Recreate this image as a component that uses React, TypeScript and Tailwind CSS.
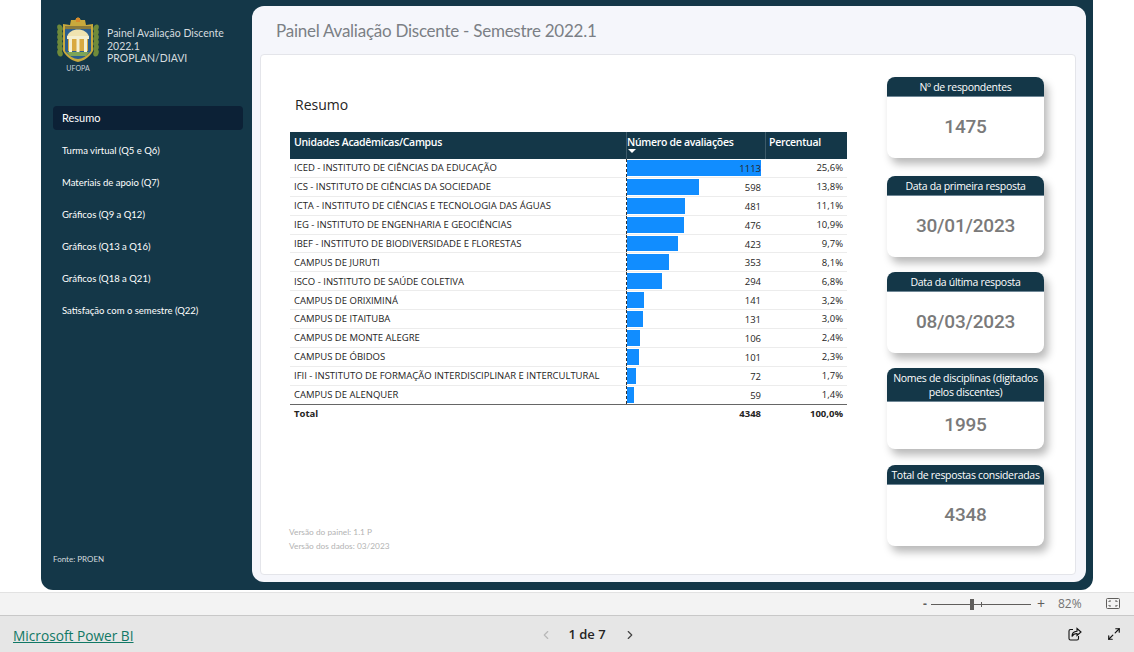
import React from 'react';
import { ChevronLeft, ChevronRight, Maximize2 } from 'lucide-react';

const menu = [
  'Turma virtual (Q5 e Q6)',
  'Materiais de apoio (Q7)',
  'Gráficos (Q9 a Q12)',
  'Gráficos (Q13 a Q16)',
  'Gráficos (Q18 a Q21)',
  'Satisfação com o semestre (Q22)',
];

const rows = [
  { name: 'ICED - INSTITUTO DE CIÊNCIAS DA EDUCAÇÃO', total: 1113, pct: '25,6%' },
  { name: 'ICS - INSTITUTO DE CIÊNCIAS DA SOCIEDADE', total: 598, pct: '13,8%' },
  { name: 'ICTA - INSTITUTO DE CIÊNCIAS E TECNOLOGIA DAS ÁGUAS', total: 481, pct: '11,1%' },
  { name: 'IEG - INSTITUTO DE ENGENHARIA E GEOCIÊNCIAS', total: 476, pct: '10,9%' },
  { name: 'IBEF - INSTITUTO DE BIODIVERSIDADE E FLORESTAS', total: 423, pct: '9,7%' },
  { name: 'CAMPUS DE JURUTI', total: 353, pct: '8,1%' },
  { name: 'ISCO - INSTITUTO DE SAÚDE COLETIVA', total: 294, pct: '6,8%' },
  { name: 'CAMPUS DE ORIXIMINÁ', total: 141, pct: '3,2%' },
  { name: 'CAMPUS DE ITAITUBA', total: 131, pct: '3,0%' },
  { name: 'CAMPUS DE MONTE ALEGRE', total: 106, pct: '2,4%' },
  { name: 'CAMPUS DE ÓBIDOS', total: 101, pct: '2,3%' },
  { name: 'IFII - INSTITUTO DE FORMAÇÃO INTERDISCIPLINAR E INTERCULTURAL', total: 72, pct: '1,7%' },
  { name: 'CAMPUS DE ALENQUER', total: 59, pct: '1,4%' },
];

const leaves = [10, 15, 20, 25, 30, 35];

const Crest = () => (
  <svg width="44" height="47" viewBox="0 0 44 47">
    {/* ramos */}
    {leaves.map((y) => (
      <g key={y} fill="#6f8a3a">
        <ellipse cx="4" cy={y + 2} rx="2.6" ry="3.6" transform={`rotate(-20 4 ${y + 2})`} />
        <ellipse cx="40" cy={y + 2} rx="2.6" ry="3.6" transform={`rotate(20 40 ${y + 2})`} />
      </g>
    ))}
    {/* escudo */}
    <path d="M7 8 L14 9 L15 4 L19 4 L22 1 L25 4 L29 4 L30 9 L37 8 L37 35 C33 42 27 45 22 46 C17 45 11 42 7 35Z" fill="#c9a93c" />
    <path d="M20 2 H24 V6 H20Z" fill="#d98a2b" />
    <path d="M9 10 H35 V35 C31 40 26 43 22 43 C18 43 13 40 9 35Z" fill="#2c5f8f" />
    <path d="M9 10 H35 V13 H9Z" fill="#8a7a3c" />
    {/* templo */}
    <path d="M11 21 C13 11 31 11 33 21Z" fill="#efe3b0" />
    <rect x="11" y="20" width="22" height="3" fill="#f4efd0" />
    <rect x="12" y="23" width="20" height="12" fill="#d9a93f" />
    <rect x="13" y="23" width="3" height="13" fill="#f4efd0" />
    <rect x="20.5" y="23" width="3" height="13" fill="#f4efd0" />
    <rect x="28" y="23" width="3" height="13" fill="#f4efd0" />
    <path d="M11 36 H33 L30 40 H14Z" fill="#7da457" />
  </svg>
);

const Kpi = ({ title, value, tall }: { title: string; value: string; tall?: boolean }) => (
  <div className="w-[157px] h-[81px] rounded-[8px] bg-white flex flex-col overflow-hidden shadow-[4px_6px_8px_rgba(0,0,0,0.28)]">
    <div className={`bg-[#143748] text-white text-[10.5px] tracking-[-0.3px] leading-[14px] text-center flex items-center justify-center border-b border-[#6f8796] ${tall ? 'h-[34px]' : 'h-[20px]'}`}>
      {title}
    </div>
    <div className="flex-1 flex items-center justify-center text-[19px] tracking-[-0.2px] text-[#7a7a7a] font-medium font-['Roboto',sans-serif]">
      {value}
    </div>
  </div>
);

export default function App() {
  return (
    <div className="h-[652px] w-[1134px] overflow-hidden flex flex-col bg-white font-['Open_Sans',sans-serif]">
      <div className="mx-[41px] h-[590px] flex shrink-0 bg-[#143748] rounded-b-[12px] pt-[6px] pr-[7px] pb-[8px]">
        {/* menu lateral */}
        <aside className="w-[211px] shrink-0 flex flex-col pl-[12px] pr-[9px] font-['Lato',sans-serif] text-white">
          <div className="flex items-start pl-[3px] pt-[10px] h-[100px]">
            <div className="flex flex-col items-center w-[44px]">
              <Crest />
              <span className="text-[7px] leading-[8px] text-[#c8d0d6] mt-[1px]">UFOPA</span>
            </div>
            <div className="ml-[7px] mt-[11px] text-[10.5px] leading-[12.5px] text-[#d5dbdf]">
              Painel Avaliação Discente<br />2022.1<br />PROPLAN/DIAVI
            </div>
          </div>
          <div className="h-[24px] rounded-[4px] bg-[#0c2136] flex items-center pl-[9px] text-[11px]">Resumo</div>
          <nav className="flex flex-col mt-[5px]">
            {menu.map((item) => (
              <div key={item} className="h-[32px] flex items-center pl-[9px] text-[9.5px]">{item}</div>
            ))}
          </nav>
          <div className="mt-auto mb-[18px] text-[8px] leading-[10px] text-[#d5dbdf]">Fonte: PROEN</div>
        </aside>

        {/* area principal */}
        <main className="flex-1 bg-[#f5f6fb] rounded-[12px] flex flex-col pl-[8px] pr-[10px] pb-[7px]">
          <div className="h-[48px] flex items-center pl-[16px] text-[17px] tracking-[-0.25px] text-[#7b7f85] shrink-0 pt-[2px] font-['Lato',sans-serif]">
            Painel Avaliação Discente - Semestre 2022.1
          </div>
          <div className="flex-1 bg-white rounded-[4px] border border-[#e4e5ea] flex pl-[29px] pr-[31px]">
            <div className="w-[557px] flex flex-col">
              <div className="h-[77px] pl-[5px] pt-[40px] text-[14px] leading-[20px] text-[#252423]">Resumo</div>
              <div className="text-[9.5px] text-[#252423]">
                <div className="h-[27px] bg-[#143748] text-white text-[10.5px] tracking-[-0.3px] font-semibold flex">
                  <div className="w-[336px] pl-[4px] pt-[3px]">Unidades Acadêmicas/Campus</div>
                  <div className="w-[139px] pt-[3px] border-l border-[#3c5a69] leading-[14px]">
                    Número de avaliações
                    <div className="w-0 h-0 ml-[1px] border-x-[4px] border-x-transparent border-t-[4px] border-t-white" />
                  </div>
                  <div className="flex-1 pl-[3px] pt-[3px] border-l border-[#3c5a69]">Percentual</div>
                </div>
                {rows.map((r) => (
                  <div key={r.name} className="h-[18.9px] flex items-center border-b border-[#ececec]">
                    <div className="w-[336px] pl-[4px] pt-[1px] whitespace-nowrap">{r.name}</div>
                    <div className="w-[139px] h-full relative border-l border-dashed border-[#333] py-[1px]">
                      <div className="h-full bg-[#118dff]" style={{ width: `${(r.total / 1113) * 134}px` }} />
                      <span className="absolute right-[4px] top-[3px] leading-[13px]">{r.total}</span>
                    </div>
                    <div className="flex-1 text-right pr-[4px] pt-[1px]">{r.pct}</div>
                  </div>
                ))}
                <div className="h-[19px] flex items-center border-t border-[#666] -mt-px pt-[1px] font-bold">
                  <div className="w-[336px] pl-[4px]">Total</div>
                  <div className="w-[139px] text-right pr-[4px]">4348</div>
                  <div className="flex-1 text-right pr-[4px]">100,0%</div>
                </div>
              </div>
              <div className="mt-auto mb-[21px] -ml-[1px] font-['Lato',sans-serif] text-[8.3px] leading-[14px] text-[#b3b3b3]">
                <div>Versão do painel: 1.1 P</div>
                <div>Versão dos dados: 03/2023</div>
              </div>
            </div>
            <div className="ml-auto pt-[22px] flex flex-col">
              <Kpi title="Nº de respondentes" value="1475" />
              <div className="mt-[18px]"><Kpi title="Data da primeira resposta" value="30/01/2023" /></div>
              <div className="mt-[15px]"><Kpi title="Data da última resposta" value="08/03/2023" /></div>
              <div className="mt-[15px]"><Kpi title="Nomes de disciplinas (digitados pelos discentes)" value="1995" tall /></div>
              <div className="mt-[16px]"><Kpi title="Total de respostas consideradas" value="4348" /></div>
            </div>
          </div>
        </main>
      </div>

      {/* barra de zoom */}
      <div className="mt-[2px] h-[24px] shrink-0 bg-[#f3f3f3] border-t border-[#e2e2e2] border-b border-b-[#c8c8c8] flex items-center justify-end text-[#605e5c] text-[12px] pr-[14px]">
        <span className="font-bold text-[#605e5c] mr-[4px]">-</span>
        <div className="relative w-[100px] h-px bg-[#605e5c]">
          <div className="absolute left-[39px] -top-[5px] w-[4px] h-[11px] bg-[#605e5c]" />
          <div className="absolute left-[50px] -top-[2px] w-px h-[5px] bg-[#605e5c]" />
        </div>
        <span className="ml-[6px] text-[14px] leading-none">+</span>
        <span className="ml-[13px] w-[33px] text-[#737373]">82%</span>
        <svg className="ml-[15px]" width="14" height="12" viewBox="0 0 14 12" fill="none" stroke="#605e5c">
          <rect x="0.5" y="0.5" width="13" height="10" rx="1" />
          <path d="M3 4V3H5M9 3H11V4M11 7V8H9M5 8H3V7" />
        </svg>
      </div>

      {/* rodape */}
      <div className="flex-1 bg-[#e6e6e6] relative flex items-center justify-center">
        <a className="absolute left-[13px] top-[11px] text-[13.7px] leading-[18px] text-[#117865] underline">Microsoft Power BI</a>
        <div className="flex items-center text-[13px] font-semibold text-[#252423] ml-[42px] pt-[2px]">
          <ChevronLeft size={14} className="text-[#b8b8b8] mr-[15px]" />
          <span>1 de 7</span>
          <ChevronRight size={14} className="text-[#444] ml-[17px]" />
        </div>
        <div className="absolute right-[13px] top-[11px] flex items-center gap-[25px]">
          <svg width="14" height="14" viewBox="0 0 14 14" fill="none" stroke="#111" strokeWidth="1.1">
            <path d="M5 2.5H2.5a1.5 1.5 0 0 0-1.5 1.5v7.5A1.5 1.5 0 0 0 2.5 13H9a1.5 1.5 0 0 0 1.5-1.5V9" />
            <path d="M9 1.5l4 3.5-4 3.5V6.5C6.5 6.5 5 7.5 4 9.5c0-3 2-5 5-5.2Z" />
          </svg>
          <Maximize2 size={14} className="text-[#111]" />
        </div>
      </div>
    </div>
  );
}
